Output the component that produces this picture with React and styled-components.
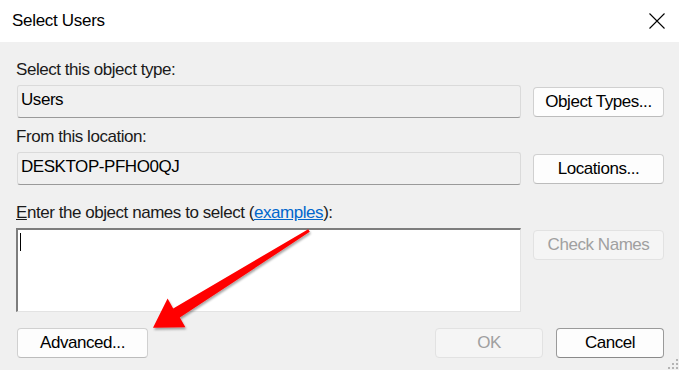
import React from 'react';
import styled, { createGlobalStyle } from 'styled-components';

const GlobalStyle = createGlobalStyle`
  html, body { margin: 0; padding: 0; background: #f0f0f0; }
  body { font-family: "Liberation Sans", Arial, sans-serif; }
`;

const Window = styled.div`
  position: relative;
  width: 679px;
  height: 370px;
  display: flex;
  flex-direction: column;
  overflow: hidden;
  font-family: "Liberation Sans", Arial, sans-serif;
  font-size: 17px;
  letter-spacing: -0.45px;
  line-height: 18px;
  color: #000;
`;

const TitleBar = styled.div`
  flex: none;
  height: 42px;
  background: #fff;
  display: flex;
  align-items: center;
  justify-content: space-between;
  padding: 0 14px 0 12px;
`;

const Title = styled.div`
  color: #000;
  letter-spacing: -0.3px;
`;

const CloseIcon = styled.svg`
  display: block;
  width: 16px;
  height: 16px;
`;

const Body = styled.div`
  flex: 1;
  background: #f0f0f0;
  display: flex;
  flex-direction: column;
  padding: 19px 15px 0 16px;
`;

const Label = styled.div`
  height: 18px;
  margin-top: ${p => p.$mt || 0}px;
  white-space: nowrap;
  color: #1a1a1a;
`;

const AccessKey = styled.span`
  text-decoration: underline;
`;

const Link = styled.span`
  color: #0066cc;
  text-decoration: underline;
`;

const Row = styled.div`
  display: flex;
  align-items: ${p => p.$align || 'center'};
  gap: 12px;
  margin-top: ${p => p.$mt || 0}px;
`;

const Field = styled.div`
  box-sizing: border-box;
  width: 504px;
  height: 33px;
  margin-left: 1px;
  padding: 5px 3px 0;
  background: #f0f0f0;
  border: 1px solid #dadada;
  border-bottom-color: #9a9a9a;
  border-radius: 3px;
  color: #000;
`;

const TextArea = styled.div`
  box-sizing: border-box;
  width: 505px;
  height: 84px;
  background: #fff;
  border-style: solid;
  border-width: 2px 1px 1px 2px;
  border-color: #7d7d7d #e3e3e3 #e3e3e3 #7d7d7d;
  padding: 3px 0 0 2px;
`;

const Caret = styled.div`
  width: 1px;
  height: 18px;
  background: #000;
`;

const Button = styled.div`
  box-sizing: border-box;
  flex: none;
  width: ${p => p.$w || 131}px;
  height: 30px;
  display: flex;
  align-items: center;
  justify-content: center;
  border-radius: 4px;
  border: 1px solid ${p => (p.$default ? '#9a9a9a' : p.$disabled ? '#e2e2e2' : '#d0d0d0')};
  border-bottom-color: ${p => (p.$default ? '#8a8a8a' : p.$disabled ? '#e2e2e2' : '#bcbcbc')};
  background: ${p => (p.$disabled ? '#f5f5f5' : '#fdfdfd')};
  color: ${p => (p.$disabled ? '#a0a0a0' : '#000')};
  margin-top: ${p => p.$mt || 0}px;
  white-space: nowrap;
`;

const Footer = styled.div`
  display: flex;
  align-items: center;
  margin-top: 16px;
  padding-left: 1px;
`;

const FooterRight = styled.div`
  margin-left: auto;
  display: flex;
  gap: 13px;
`;

const Overlay = styled.svg`
  position: absolute;
  left: 0;
  top: 0;
  width: 679px;
  height: 370px;
  pointer-events: none;
`;

const Grip = styled.svg`
  position: absolute;
  right: 0;
  bottom: 0;
  width: 12px;
  height: 12px;
`;

export default function App() {
  return (
    <Window>
      <GlobalStyle />
      <TitleBar>
        <Title>Select Users</Title>
        <CloseIcon viewBox="0 0 16 16">
          <path d="M0.5 0.5 L15.5 15.5 M15.5 0.5 L0.5 15.5" stroke="#000" strokeWidth="1.1" fill="none" />
        </CloseIcon>
      </TitleBar>
      <Body>
        <Label>Select this object type:</Label>
        <Row $mt={6}>
          <Field>Users</Field>
          <Button>Object Types...</Button>
        </Row>
        <Label $mt={10}>From this location:</Label>
        <Row $mt={6}>
          <Field>DESKTOP-PFHO0QJ</Field>
          <Button>Locations...</Button>
        </Row>
        <Label $mt={19}>
          <AccessKey>E</AccessKey>nter the object names to select (<Link>examples</Link>):
        </Label>
        <Row $mt={6} $align="flex-start">
          <TextArea>
            <Caret />
          </TextArea>
          <Button $mt={2} $disabled>Check Names</Button>
        </Row>
        <Footer>
          <Button>Advanced...</Button>
          <FooterRight>
            <Button $w={108} $disabled>OK</Button>
            <Button $w={108} $default>Cancel</Button>
          </FooterRight>
        </Footer>
      </Body>
      <Overlay viewBox="0 0 679 370">
        <defs>
          <filter id="arrowShadow" x="-10%" y="-10%" width="130%" height="130%">
            <feDropShadow dx="1" dy="2" stdDeviation="1.2" floodColor="#000" floodOpacity="0.35" />
          </filter>
        </defs>
        <polygon
          points="308.2,229.2 173.2,308.4 167.6,298.6 153,327.8 185.4,327.2 179.8,317.6 309.8,231.8"
          fill="#ff0000"
          filter="url(#arrowShadow)"
        />
      </Overlay>
      <Grip viewBox="0 0 12 12">
        {[
          [9, 1], [5, 5], [9, 5], [1, 9], [5, 9], [9, 9],
        ].map(([x, y], i) => (
          <rect key={i} x={x} y={y} width="2" height="2" fill="#b4b4b4" />
        ))}
      </Grip>
    </Window>
  );
}
